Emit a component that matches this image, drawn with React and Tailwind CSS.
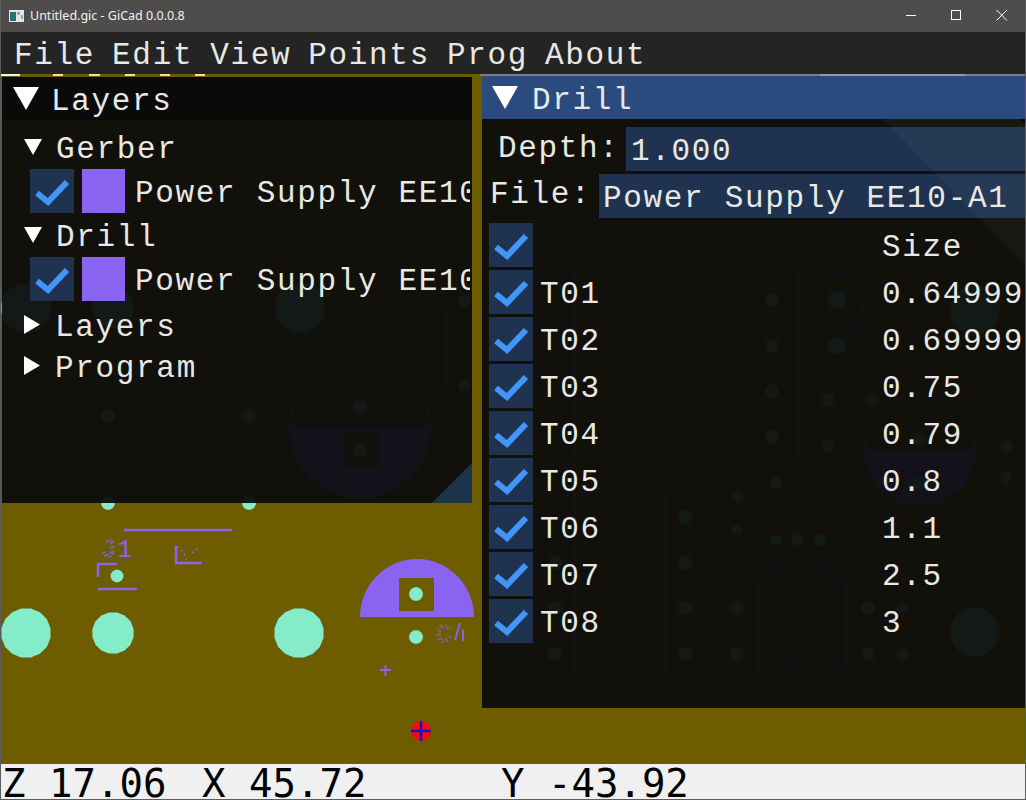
const MONO = "font-['Liberation_Mono',monospace] text-[31px] tracking-[1.67px] text-[#e8e8e4] whitespace-pre leading-[44px]";
const TXT = `${MONO} pt-[6px]`;
const MINT = "#85ecca";
const PURPLE = "#8a63f0";
const OLIVE = "#6e5c00";

function poly(cx, cy, r, n = 16) {
  const pts = [];
  for (let i = 0; i < n; i++) {
    const a = (Math.PI * 2 * i) / n + Math.PI / n;
    pts.push(`${(cx + r * Math.cos(a)).toFixed(1)},${(cy + r * Math.sin(a)).toFixed(1)}`);
  }
  return pts.join(" ");
}

const HOLES = [
  [26, 633, 25], [113, 633, 21], [299, 633, 25], [26, 308, 25], [113, 308, 21], [300, 308, 25],
  [975, 310, 25], [975, 632, 25],
  [108, 416, 7], [249, 416, 7], [108, 503, 7], [249, 503, 7], [117, 576, 6.5],
  [416, 594, 7], [416, 637, 7], [360, 407, 7], [360, 450, 7], [464, 301, 6], [464, 386, 6],
  [772, 300, 7], [772, 346, 7], [772, 391, 7], [772, 437, 7],
  [837, 300, 9], [837, 346, 9], [828, 400, 6], [872, 400, 6], [828, 446, 6], [1006, 446, 6], [1006, 477, 6],
  [920, 440, 7], [920, 483, 7], [776, 483, 6], [738, 497, 6],
  [685, 517, 7], [685, 563, 7], [685, 608, 7], [685, 654, 7],
  [737, 608, 7], [737, 654, 7], [737, 530, 5],
  [555, 563, 7], [555, 608, 7], [555, 654, 7],
  [868, 608, 7], [902, 608, 6], [868, 654, 7], [902, 654, 6],
  [776, 540, 6], [797, 540, 6], [820, 540, 6],
];

const FONT = "'Liberation Mono', monospace";

function Board() {
  return (
    <svg className="absolute inset-0 w-full h-full" viewBox="1 74 1024 690">
      <rect x="0" y="74" width="1026" height="690" fill={OLIVE} />
      <line x1="480" y1="75" x2="1026" y2="75" stroke="#7d7d7a" strokeWidth="2" />
      <line x1="820" y1="75" x2="965" y2="75" stroke="#9a9a98" strokeWidth="2" />
      <line x1="1" y1="75" x2="20" y2="75" stroke="#f2f2e8" strokeWidth="2" />
      {[[53, 63], [89, 100], [125, 135], [160, 170], [195, 205]].map(([a, b]) => (
        <line key={a} x1={a} y1="75" x2={b} y2="75" stroke="#e8e4b0" strokeWidth="2" />
      ))}

      <g stroke={PURPLE} strokeWidth="2.5" fill="none">
        <path d="M124 530H232" />
        <path d="M98 577V564H117" />
        <path d="M98 589H137" />
        <path d="M176 546V563H202" />
        <path d="M177 547a16 16 0 0 1 9 14" strokeDasharray="2 3" strokeWidth="1.5" />
        <path d="M192 553l6 -5" strokeDasharray="2 3" strokeWidth="1.5" />
        <path d="M380 670H391M385.5 665V676" strokeWidth="2" />
        <path d="M455 640L460 623M463 630V641" strokeWidth="2" />
        <g strokeWidth="2">
          <path d="M130 388H232M446 305V390M575 268H798V458H575ZM575 492H665V670H575ZM758 582H847V670H758Z" />
          <circle cx="802" cy="668" r="17" />
          <circle cx="837" cy="300" r="27" />
          <circle cx="360" cy="427" r="70" />
          <circle cx="920" cy="450" r="55" />
          <path d="M770 497Q797 485 830 497L800 540ZM800 540L770 570H830Z" />
          <path d="M710 505Q720 530 745 525M830 400L860 320" />
        </g>
      </g>

      <text x="101" y="557" fill="none" stroke={PURPLE} strokeWidth="1.2" strokeDasharray="3 2" fontFamily={FONT} fontSize="26">J</text>
      <text x="117" y="557" fill={PURPLE} fontFamily={FONT} fontSize="26">1</text>
      <text x="436" y="642" fill="none" stroke={PURPLE} strokeWidth="1.2" strokeDasharray="2 3" fontFamily={FONT} fontSize="26">C</text>
      <text x="675" y="347" fill={PURPLE} fontFamily={FONT} fontSize="22">T1</text>

      <path d="M360 617A57 58 0 0 1 474 617Z" fill={PURPLE} />
      <rect x="399" y="578" width="35" height="33" fill={OLIVE} />
      <path d="M290 427A70 70 0 0 0 430 427Z" fill={PURPLE} />
      <rect x="343" y="433" width="35" height="35" fill={OLIVE} />
      <path d="M865 450A55 55 0 0 0 975 450Z" fill={PURPLE} />

      {HOLES.map(([x, y, r]) => (
        <polygon key={`${x}-${y}`} points={poly(x, y, r, r > 15 ? 16 : 12)} fill={MINT} />
      ))}

      <circle cx="421" cy="731" r="10" fill="#fb0a0a" />
      <path d="M411 731H431M421 721V741" stroke="#1414d0" strokeWidth="2.5" />
    </svg>
  );
}

function Check() {
  return (
    <div className="w-11 h-11 shrink-0 bg-[#1f3350]">
      <svg viewBox="0 0 44 44" className="w-11 h-11">
        <path d="M7 24L18 33L37 13" fill="none" stroke="#4296fa" strokeWidth="6" />
      </svg>
    </div>
  );
}

function Tri({ dir = "down", size = "s" }) {
  if (dir === "right") {
    return (
      <svg viewBox="0 0 16 19" className="w-4 h-[19px] shrink-0">
        <path d="M0 0L16 9.5L0 19Z" fill="#fff" />
      </svg>
    );
  }
  if (size === "l") {
    return (
      <svg viewBox="0 0 26 23" className="w-[26px] h-[23px] shrink-0">
        <path d="M0 0H26L13 23Z" fill="#fff" />
      </svg>
    );
  }
  return (
    <svg viewBox="0 0 18 16" className="w-[18px] h-4 shrink-0">
      <path d="M0 0H18L9 16Z" fill="#fff" />
    </svg>
  );
}

function LayerRow() {
  return (
    <div className="flex items-center pl-[28px] h-11">
      <Check />
      <div className="w-[43px] h-11 ml-2 shrink-0 bg-[#8a63f0]" />
      <span className={`${TXT} ml-[10px]`}>Power Supply EE10-A1</span>
    </div>
  );
}

function TreeRow({ label, dir, className = "" }) {
  return (
    <div className={`flex items-center ${className}`}>
      <div className={`${dir === "right" ? "w-[53px]" : "w-[54px]"} pl-[22px] flex`}>
        <Tri dir={dir} />
      </div>
      <span className={TXT}>{label}</span>
    </div>
  );
}

const TOOLS = [
  ["T01", "0.64999"], ["T02", "0.69999"], ["T03", "0.75"], ["T04", "0.79"],
  ["T05", "0.8"], ["T06", "1.1"], ["T07", "2.5"], ["T08", "3"],
];

function ToolRow({ name, size }) {
  return (
    <div className="flex items-center h-11">
      <Check />
      <span className={`${TXT} w-[349px] pl-[7px] shrink-0`}>{name}</span>
      <span className={TXT}>{size}</span>
    </div>
  );
}

function App() {
  return (
    <div className="w-[1026px] h-[800px] flex flex-col overflow-hidden bg-[#565654] border-x border-b border-[#5c5c5c]">
      <div className="h-8 shrink-0 flex items-center bg-[#4e4d4b] relative">
        <svg viewBox="0 0 15 12" className="w-[15px] h-3 ml-2 shrink-0">
          <rect width="15" height="12" fill="#dfe8e6" />
          <rect x="1" y="2" width="6" height="9" fill="#2d6f73" />
          <rect x="8" y="2" width="3" height="3" fill="#7eb0b0" />
          <rect x="12" y="5" width="2" height="4" fill="#8ba8a6" />
        </svg>
        <span className="ml-[6px] text-[12.5px] text-[#f2f2f2] font-['Noto_Sans',sans-serif] whitespace-pre">Untitled.gic - GiCad 0.0.0.8</span>
        <div className="ml-auto flex items-center">
          <svg viewBox="0 0 46 32" className="w-[46px] h-8">
            <path d="M19 15.5H29" stroke="#fff" strokeWidth="1" />
          </svg>
          <svg viewBox="0 0 46 32" className="w-[46px] h-8">
            <rect x="18.5" y="10.5" width="9" height="9" fill="none" stroke="#fff" strokeWidth="1" />
          </svg>
          <svg viewBox="0 0 46 32" className="w-[46px] h-8">
            <path d="M17.5 10L28 20.5M28 10L17.5 20.5" stroke="#fff" strokeWidth="1" />
          </svg>
        </div>
      </div>

      <div className="h-[42px] shrink-0 bg-[#242424] flex items-center pl-[13px] gap-[17px]">
        {["File", "Edit", "View", "Points", "Prog", "About"].map((m) => (
          <span key={m} className={TXT}>{m}</span>
        ))}
      </div>

      <div className="relative flex-1 overflow-hidden">
        <Board />

        <div className="absolute left-[1px] top-[3px] w-[470px] h-[426px] bg-[#0c0c0c]/94 overflow-hidden">
          <div className="h-[43px] bg-[#0a0a0a] flex items-center pl-[11px] gap-[12px]">
            <Tri size="l" />
            <span className={TXT}>Layers</span>
          </div>
          <div className="w-[468px] overflow-hidden">
            <div className="pt-[5px]" />
            <TreeRow label="Gerber" className="h-11" />
            <LayerRow />
            <TreeRow label="Drill" className="h-11" />
            <LayerRow />
            <TreeRow label="Layers" dir="right" className="h-[41px] mt-[3px]" />
            <TreeRow label="Program" dir="right" className="h-[41px]" />
          </div>
          <svg viewBox="0 0 40 40" className="absolute right-0 bottom-0 w-10 h-10">
            <path d="M0 40L40 0V40Z" fill="#1c334b" />
          </svg>
        </div>

        <div className="absolute left-[481px] top-[2px] w-[544px] h-[632px] bg-[#0c0c0c]/94 overflow-hidden">
          <div className="h-[43px] bg-[#2b4a7e] flex items-center pl-[10px] gap-[14px]">
            <Tri size="l" />
            <span className={TXT}>Drill</span>
          </div>
          <div className="mt-2 h-11 flex items-center pl-[16px]">
            <span className={`${MONO} w-[128px]`}>Depth:</span>
            <div className={`${MONO} flex-1 h-11 bg-[#1f3350] pl-[5px] pt-[3px]`}>1.000</div>
          </div>
          <div className="mt-[3px] h-11 flex items-center pl-[8px]">
            <span className={`${MONO} w-[109px] pb-[2px]`}>File:</span>
            <div className={`${MONO} flex-1 h-11 bg-[#1f3350] pl-[4px] pt-[3px]`}>Power Supply EE10-A1</div>
          </div>
          <div className="mt-[5px] pl-[7px] flex flex-col gap-[3px]">
            <ToolRow name="" size="Size" />
            {TOOLS.map(([n, s]) => (
              <ToolRow key={n} name={n} size={s} />
            ))}
          </div>
          <svg viewBox="0 0 544 632" className="absolute inset-0 w-[544px] h-[632px] pointer-events-none">
            <path d="M401 43L544 191V43Z" fill="#ffffff" fillOpacity="0.03" />
            <path d="M538 43L544 43V49Z" fill="#000000" fillOpacity="0.6" />
          </svg>
        </div>
      </div>

      <div className="h-[35px] shrink-0 bg-[#f0f0f0] flex pl-[1px] pt-[2px] font-['DejaVu_Sans_Mono',monospace] text-[39px] leading-[35px] text-black whitespace-pre overflow-hidden">
        <span className="w-[200px]">Z 17.06</span>
        <span className="w-[299px]">X 45.72</span>
        <span>Y -43.92</span>
      </div>
    </div>
  );
}

export default App;
